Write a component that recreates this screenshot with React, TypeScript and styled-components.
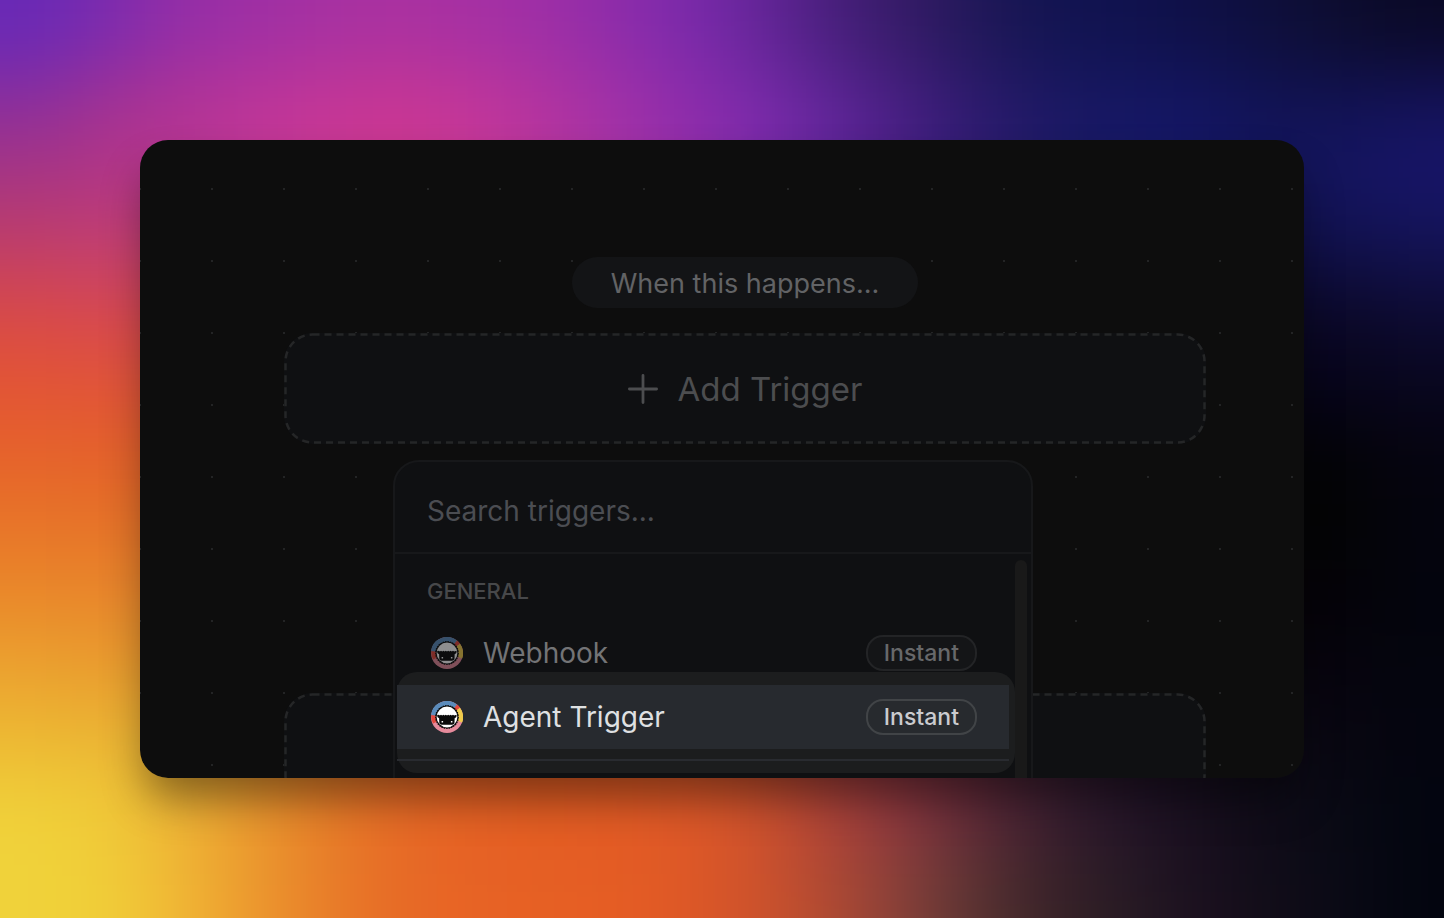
import React from "react";
import styled, { createGlobalStyle } from "styled-components";

const GlobalStyle = createGlobalStyle`
  *, *::before, *::after { box-sizing: border-box; }
  body { margin: 0; background: #050308; }
  body, button, input { font-family: Inter, "Liberation Sans", sans-serif; }
`;

/* Colour mesh of the wallpaper: 20 columns by 13 rows, blurred together. */
const topRows = [
  "6829b6 7b2bae 942ea7 9e2fa4 a631a2 aa31a0 a630a3 9e2fa6 8e2ca9 7a2aac 652599 471f7c 351b66 201858 121450 10124f 0f1047 0e0f3c 0d0d2f 0a0926",
  "8d2f9b a63391 b33493 c03697 c83795 cb3791 c63798 b6349e a432a7 902cab 7e2bad 62269b 481f84 2e1b70 1d1965 161865 141665 121458 111255 15135c",
];
const bottomRows = [
  "f0d23a f0ca38 edb335 e8982e e67d28 e66a26 e46024 e25c23 e15a24 de5828 ce522c aa403a 88353f 5e2838 3a1e30 24142a 180f1e 0e0b18 090a14 030510",
  "f0d23a f0ce38 f0b635 ec982e e87e29 e76a26 e86325 e66024 e65d24 de5826 ce522c b04a32 86403a 593432 3a2228 281c24 1c1020 120d18 0a0a16 03050f",
];
const sideRows: [string, string, string, string][] = [
  ["a73582", "b33584", "151560", "17156a"],
  ["c03e68", "c34070", "10104a", "131354"],
  ["d94a47", "d8484f", "0b0824", "0d0a30"],
  ["e35534", "e15538", "06041a", "08061e"],
  ["e6632a", "e46229", "040404", "05040e"],
  ["e87628", "e67428", "040404", "04040e"],
  ["ea8a2a", "e8882c", "050308", "03040c"],
  ["eba330", "e99c2e", "07040e", "04050e"],
  ["edb933", "eab634", "080610", "04050f"],
];

const upper = topRows.map((r) => r.split(" "));
const lower = bottomRows.map((r) => r.split(" "));
const middle = sideRows.map(([l0, l1, r0, r1], row) => {
  const neighbour = row === 0 ? upper[1] : row === sideRows.length - 1 ? lower[0] : null;
  return Array.from({ length: 20 }, (_, i) => {
    if (i === 0) return l0;
    if (i === 1) return l1;
    if (i === 18) return r0;
    if (i === 19) return r1;
    return neighbour ? neighbour[i] : i < 10 ? l1 : r0;
  });
});
const mesh = [...upper, ...middle, ...lower];

/* Outer cells reach past the edge so that the blur has no dark rim. */
const cellSpan = (index: number, last: number) => ({
  start: index === 0 ? -3 : index,
  size: index === 0 || index === last ? 4 : 1,
});

const WallpaperSvg = styled.svg`
  position: absolute;
  inset: 0;
  width: 100%;
  height: 100%;
`;

function Wallpaper() {
  return (
    <WallpaperSvg viewBox="0 0 1440 910" preserveAspectRatio="none" aria-hidden="true">
      <defs>
        <filter
          id="soften"
          filterUnits="userSpaceOnUse"
          x="-200"
          y="-200"
          width="1840"
          height="1310"
          colorInterpolationFilters="sRGB"
        >
          <feGaussianBlur stdDeviation="40" />
        </filter>
      </defs>
      <g filter="url(#soften)" shapeRendering="crispEdges">
        {mesh.map((row, j) =>
          row.map((color, i) => {
            const h = cellSpan(i, 19);
            const v = cellSpan(j, 12);
            return (
              <rect
                key={`${i}-${j}`}
                x={h.start * 72}
                y={v.start * 70}
                width={h.size * 72}
                height={v.size * 70}
                fill={`#${color}`}
              />
            );
          })
        )}
      </g>
    </WallpaperSvg>
  );
}

const Page = styled.main`
  position: relative;
  height: 100vh;
  padding: 140px;
  display: grid;
  overflow: hidden;
`;

const Canvas = styled.section`
  position: relative;
  min-height: 0;
  overflow: hidden;
  padding: 117px 98px 0 144px;
  display: flex;
  flex-direction: column;
  align-items: center;
  border-radius: 28px;
  background-color: #0d0d0d;
  background-image: radial-gradient(circle at 36px 36px, #232425 1px, transparent 1px);
  background-size: 72px 72px;
  background-position: -36px 13px;
`;

const CanvasShadow = styled.div`
  position: relative;
  min-height: 0;
  display: grid;
  border-radius: 28px;
  box-shadow: 0 26px 44px -6px rgba(0, 0, 0, 0.44);
`;

const StepLabel = styled.h2`
  margin: 0 0 25px;
  height: 51px;
  padding: 2px 39px 0;
  display: flex;
  align-items: center;
  flex-shrink: 0;
  border-radius: 26px;
  background: #131416;
  color: #626365;
  font-size: 27px;
  line-height: 32px;
  font-weight: 400;
  white-space: nowrap;
`;

const StepAnchor = styled.div`
  position: relative;
  z-index: 1;
  width: 100%;
  flex-shrink: 0;
`;

const StepBox = styled.button`
  position: relative;
  width: 100%;
  height: 111px;
  padding: 0;
  display: flex;
  align-items: center;
  justify-content: center;
  gap: 20px;
  border: 0;
  border-radius: 28px;
  background: #0f1012;
  color: #4c4d4f;
  font-size: 33px;
  line-height: 40px;
  font-weight: 400;
`;

const NextStep = styled(StepBox)`
  margin-top: 249px;
  flex-shrink: 0;
`;

const DashedSvg = styled.svg`
  position: absolute;
  inset: 0;
  width: 100%;
  height: 100%;

  rect {
    width: calc(100% - 3px);
    height: calc(100% - 3px);
  }
`;

function DashedOutline() {
  return (
    <DashedSvg aria-hidden="true">
      <rect x="1.5" y="1.5" rx="27" fill="none" stroke="#252627" strokeWidth="2.5" strokeDasharray="7 5" />
    </DashedSvg>
  );
}

function PlusIcon() {
  return (
    <svg width="30" height="30" viewBox="0 0 30 30" fill="none" stroke="currentColor" strokeWidth="2.8" strokeLinecap="round" aria-hidden="true">
      <path d="M15 1.4v27.2M1.4 15h27.2" />
    </svg>
  );
}

const Menu = styled.div`
  position: absolute;
  top: calc(100% + 16px);
  left: 109px;
  width: 640px;
  height: 480px;
  display: flex;
  flex-direction: column;
  overflow: hidden;
  border: 2px solid #17181a;
  border-radius: 26px;
  background: #0f1012;
`;

const Search = styled.input`
  height: 92px;
  padding: 8px 32px 0;
  flex-shrink: 0;
  border: 0;
  border-bottom: 2px solid #17181a;
  outline: 0;
  background: transparent;
  color: #dcdee0;
  font-size: 28px;
  line-height: 34px;

  &::placeholder {
    color: #4b4d52;
    opacity: 1;
  }
`;

const Results = styled.div`
  flex: 1;
  display: flex;
  min-height: 0;
`;

const List = styled.div`
  flex: 1;
  padding-top: 20px;
`;

const GroupTitle = styled.h3`
  margin: 0;
  height: 47px;
  padding: 3px 32px 0;
  color: #47484a;
  font-size: 22px;
  line-height: 28px;
  font-weight: 500;
`;

const ScrollTrack = styled.div`
  width: 12px;
  margin: 6px 4px 0 6px;
  border-radius: 6px;
  background: #191919;
`;

const Option = styled.button<{ $active?: boolean }>`
  width: 100%;
  height: 64px;
  padding: 0 32px 0 36px;
  display: flex;
  align-items: center;
  gap: 20px;
  border: 0;
  background: ${(p) => (p.$active ? "#272a2f" : "transparent")};
  color: ${(p) => (p.$active ? "#dfe0e2" : "#737476")};
  font-size: 28px;
  line-height: 34px;
  text-align: left;
  white-space: nowrap;
`;

const OptionName = styled.span`
  flex: 1;
`;

const Badge = styled.span<{ $active?: boolean }>`
  height: 36px;
  padding: 0 16px;
  display: flex;
  align-items: center;
  border: 2px solid ${(p) => (p.$active ? "#414447" : "#232426")};
  border-radius: 17px;
  background: ${(p) => (p.$active ? "#272a2e" : "#141517")};
  color: ${(p) => (p.$active ? "#cacbcf" : "#67686a")};
  font-size: 23px;
  line-height: 28px;
  font-weight: 500;
`;

const Spotlight = styled.div`
  position: relative;
  margin-left: 2px;
  isolation: isolate;

  &::before {
    content: "";
    position: absolute;
    z-index: -1;
    inset: -13px -6px -12px 0;
    border-radius: 20px;
    background: #1c1d1e;
  }

  ${Option} {
    padding-left: 34px;
  }
`;

const Divider = styled.hr`
  margin: 10px 0 0;
  height: 2px;
  border: 0;
  background: #292b30;
`;

const Sheep = styled.svg<{ $dim?: boolean }>`
  flex-shrink: 0;
  opacity: ${(p) => (p.$dim ? 0.53 : 1)};
`;

function SheepIcon({ dim }: { dim?: boolean }) {
  return (
    <Sheep $dim={dim} width="32" height="32" viewBox="0 0 32 32" aria-hidden="true">
      <circle cx="16" cy="16" r="16" fill="#e58a9b" />
      <path d="M16 16 0 15A16 16 0 0 1 26.5 4Z" fill="#5b8cbc" />
      <path d="M16 16 26 3.6A16 16 0 0 1 29.2 7Z" fill="#e2483d" />
      <path d="M16 16 29 6.7A16 16 0 0 1 31.2 21.5Z" fill="#f0cb4b" />
      <path d="M16 16 2 22.5A16 16 0 0 1 .2 14L5 9Z" fill="#e2483d" />
      <path d="M16 16 .2 14A16 16 0 0 1 8 2.2L8 7Z" fill="#5b8cbc" />
      <circle cx="16" cy="16" r="11.2" fill="#0a0a0a" stroke="#0a0a0a" strokeWidth="1.4" strokeDasharray="1.6 .8" />
      <circle cx="16" cy="16" r="10.4" fill="#fff" />
      <path
        d="M6 14.2 7.8 13.7l1 .8 1.2-.8 1.2.8 1.2-.8 1.2.8 1.2-.8 1.2.8 1.2-.8 1.2.8 1.2-.8 1.2.8 1.2-.8 1.2.8 1.6-.6.9.4c0 1.6-.8 2.5-2 2.8l-.2 4.4c0 1.5-1 2.2-2.5 2.2h-10.200c-1.500 0-2.500-.7-2.500-2.200l-.2-4.400c-1.300-.3-2-1.200-2-2.800Z"
        fill="#0a0a0a"
      />
      <path d="M10.600 20h1.500v1.500h-1.500zM19.900 20h1.500v1.500h-1.500z" fill="#fff" />
    </Sheep>
  );
}

export default function App() {
  return (
    <Page>
      <GlobalStyle />
      <Wallpaper />
      <CanvasShadow>
        <Canvas>
          <StepLabel>When this happens...</StepLabel>
          <StepAnchor>
            <StepBox type="button" aria-expanded="true">
              <DashedOutline />
              <PlusIcon />
              Add Trigger
            </StepBox>
            <Menu>
              <Search type="text" placeholder="Search triggers..." aria-label="Search triggers" />
              <Results>
                <List>
                  <GroupTitle>GENERAL</GroupTitle>
                  <Option type="button">
                    <SheepIcon dim />
                    <OptionName>Webhook</OptionName>
                    <Badge>Instant</Badge>
                  </Option>
                  <Spotlight>
                    <Option type="button" $active>
                      <SheepIcon />
                      <OptionName>Agent Trigger</OptionName>
                      <Badge $active>Instant</Badge>
                    </Option>
                    <Divider />
                  </Spotlight>
                </List>
                <ScrollTrack />
              </Results>
            </Menu>
          </StepAnchor>
          <NextStep type="button" aria-label="Add action">
            <DashedOutline />
          </NextStep>
        </Canvas>
      </CanvasShadow>
    </Page>
  );
}
